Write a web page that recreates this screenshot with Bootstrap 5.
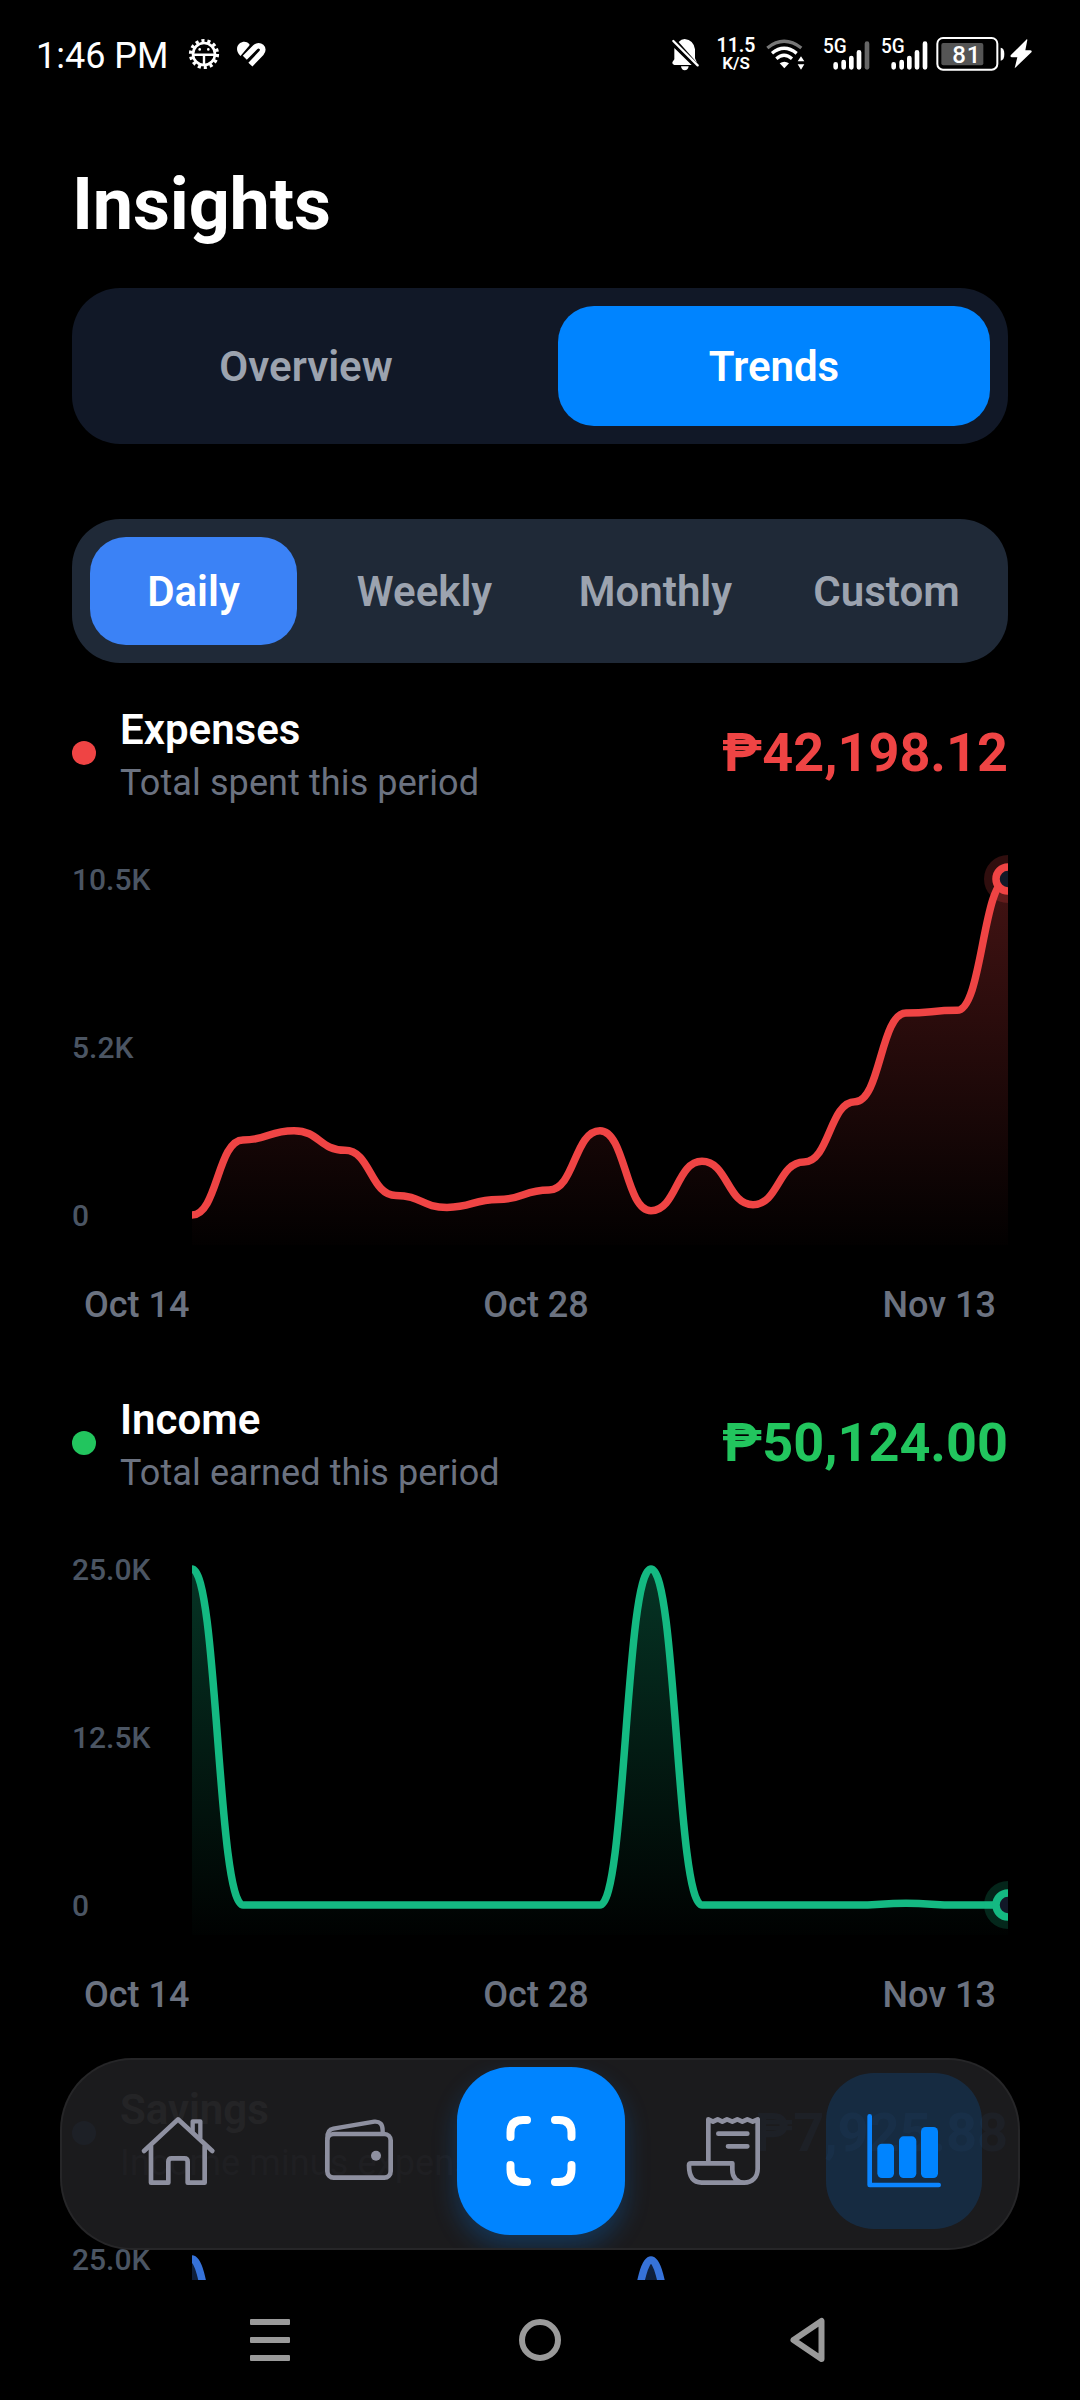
<!DOCTYPE html>
<html lang="en">
<head>
<meta charset="utf-8">
<meta name="viewport" content="width=device-width, initial-scale=1">
<title>Insights</title>
<link href="https://cdn.jsdelivr.net/npm/bootstrap@5.3.0/dist/css/bootstrap.min.css" rel="stylesheet">
<style>
  body { background: #000; color: #fff; font-family: Roboto, "Liberation Sans", sans-serif; }
  .phone { width: 1080px; height: 2400px; background: #000; }
  .statusbar { height: 108px; padding: 0 48px 0 36px; }
  .statusbar svg { overflow: visible; }
  .clock { font-size: 36px; line-height: 42px; padding-top: 3px; }
  .gear { margin-left: 19px; }
  .heart { margin-left: 16px; }
  .netspeed { width: 40px; font-weight: 600; line-height: 17px; font-size: 19.5px; margin-left: 16px; padding-top: 1px; }
  .netspeed span { font-size: 17px; }
  .wifi { margin-left: 10px; }
  .sim1 { margin-left: 17px; }
  .sim2 { margin-left: 11px; }
  .battery { margin-left: 8px; }
  .bolt { margin-left: 5px; }
  .screen { height: 2172px; padding: 55px 72px 0; }
  .page-title { font-size: 72px; line-height: 84px; font-weight: 700; letter-spacing: -.2px; margin-bottom: 41px; }
  .seg { border-radius: 48px; padding: 18px; font-size: 42px; font-weight: 600; color: #9ca3af; }
  .seg-item { border-radius: 36px; flex: 1 1 0; }
  .seg-main { height: 156px; background: #111827; gap: 36px; margin-bottom: 75px; }
  .seg-main .active { background: #0084ff; color: #fff; }
  .seg-range { height: 144px; background: #1f2937; gap: 24px; }
  .seg-range .seg-item { padding-top: 1px; }
  .seg-range .active { background: #3b82f6; color: #fff; }
  .metric { margin-top: 42px; height: 648px; }
  .metric-head { height: 96px; margin-bottom: 48px; }
  .swatch { width: 24px; height: 24px; margin-right: 24px; }
  .metric-name { font-size: 42px; line-height: 50px; font-weight: 600; margin-bottom: 10px; }
  .metric-sub { font-size: 36px; line-height: 36px; letter-spacing: .1px; color: #6b7280; }
  .amount { font-size: 54px; line-height: 60px; font-weight: 700; }
  .axis-y { width: 120px; padding: 13px 0 11px; font-size: 30px; line-height: 36px; font-weight: 500; color: #4b5563; }
  .axis-x { margin-top: 39px; padding: 0 12px; font-size: 36px; line-height: 42px; font-weight: 500; color: #6b7280; }
  .c-red { color: #ef4444; } .c-green { color: #22c55e; } .c-blue { color: #3b82f6; }
  .b-red { background: #ef4444; } .b-green { background: #22c55e; } .b-blue { background: #3b82f6; }
  .tabbar { left: 60px; top: 2058px; width: 960px; height: 192px; border-radius: 72px; padding: 0 23px 6px 25px;
            background: rgba(28,28,30,.965); border: 2px solid rgba(255,255,255,.05); color: #8e90a0; }
  .tab-slot { flex: 1 1 0; }
  .tab { width: 156px; height: 156px; border-radius: 48px; }
  .tab.active { background: rgba(0,132,255,.16); color: #0a84ff; }
  .tab.scan { width: 168px; height: 168px; border-radius: 54px; background: #0084ff; color: #fff; box-shadow: 0 12px 24px rgba(0,132,255,.25); flex: none; }
  .tab svg { fill: none; stroke: currentColor; stroke-linecap: round; stroke-linejoin: round; stroke-width: 14; }
  .tab.scan svg { stroke-width: 8; }
  .sysnav { height: 120px; }
  .sysnav div { width: 270px; }
</style>
<script src="https://cdn.jsdelivr.net/npm/bootstrap@5.3.0/dist/js/bootstrap.bundle.min.js"></script>
</head>
<body>
<div class="phone position-relative overflow-hidden d-flex flex-column">

  <header class="statusbar d-flex align-items-center flex-shrink-0">
    <div class="clock">1:46 PM</div>
    <svg class="gear flex-shrink-0" width="32" height="32" viewBox="-16 -16 32 32" fill="none" stroke="#fff">
      <circle r="13.4" stroke-width="3.4" stroke-dasharray="3.1 2.914"/>
      <circle r="11" stroke-width="2.6"/>
      <path d="M-11 .8H11M0 .8V11" stroke-width="2.4"/>
      <circle cx="-4.3" cy="-4.6" r="1.3" fill="#fff" stroke="none"/><circle cx="4.3" cy="-4.6" r="1.3" fill="#fff" stroke="none"/>
    </svg>
    <svg class="heart flex-shrink-0" width="31" height="27" viewBox="0 0 31 27">
      <path d="M4.500 15C-.8 10 .2 2.800 6 1.200C9 .3 11.300 1.200 13.200 2.900C14 3.700 13.300 4.600 12.500 5.400Z" fill="#fff"/>
      <path d="M8.800 16.800L19.200 6.200C23.500 2 29.500 7.600 25.400 12L14.400 23.600" fill="none" stroke="#fff" stroke-width="5.600"/>
    </svg>

    <div class="ms-auto d-flex align-items-center">
      <svg width="28" height="36" viewBox="97 48 84 108" fill="#fff">
        <path d="M117 66Q125 57 135 57Q162 60 166 88V115L172 128ZM104 84L156 135H104Q97 134 98 127L104 118Z"/>
        <path d="M124 139H147Q145 151 135 151Q126 151 124 139Z"/>
        <path d="M101 63L174 136" stroke="#fff" stroke-width="7" stroke-linecap="round"/>
      </svg>
      <div class="netspeed text-center text-nowrap">11.5<br><span>K/S</span></div>
      <svg class="wifi" width="40" height="36" viewBox="380 48 120 108" fill="none" stroke="#fff" stroke-width="10">
        <path d="M384 84Q434 44 486 84" stroke="#777"/>
        <path d="M398 100Q434 70 472 100"/><path d="M411 116Q434 96 458 116"/>
        <path d="M421 130Q435 120 449 130L435 145Z" fill="#fff" stroke="none"/>
        <path d="M485 109L495 124H475ZM485 149L495 133H475Z" fill="#fff" stroke="none"/>
      </svg>
      <svg class="sim1" width="47" height="36" viewBox="551 48 141 108">
        <text x="551" y="100" fill="#fff" font-size="60" font-weight="500" textLength="71" lengthAdjust="spacingAndGlyphs">5G</text>
        <path d="M589 133V142M613 126V142M636 114V142M659 97V142" stroke="#fff" stroke-width="14" stroke-linecap="round"/>
        <path d="M683 71V142" stroke="#666" stroke-width="14" stroke-linecap="round"/>
      </svg>
      <svg class="sim2" width="47" height="36" viewBox="725 48 141 108">
        <text x="725" y="100" fill="#fff" font-size="60" font-weight="500" textLength="71" lengthAdjust="spacingAndGlyphs">5G</text>
        <path d="M763 133V142M787 126V142M810 114V142M833 97V142M857 71V142" stroke="#fff" stroke-width="14" stroke-linecap="round"/>
      </svg>
      <svg class="battery" width="69" height="36" viewBox="890 48 207 108">
        <rect x="894" y="54" width="180" height="95" rx="17" fill="none" stroke="#fff" stroke-width="6"/>
        <rect x="906" y="69" width="126" height="67" rx="6" fill="#555"/>
        <path d="M1084 83Q1095 84 1095 102Q1095 121 1084 122Z" fill="#fff"/>
        <text x="939" y="128" fill="#fff" font-size="72" font-weight="500" textLength="84">81</text>
      </svg>
      <svg class="bolt" width="22" height="36" viewBox="1112 48 66 108" fill="#fff"><path d="M1163 57L1114 106Q1112 112 1118 112H1134L1126 145L1177 96Q1178 91 1172 91H1158L1164 60Z"/></svg>
    </div>
  </header>

  <main class="screen overflow-hidden flex-shrink-0">
    <h1 class="page-title">Insights</h1>

    <div class="seg seg-main d-flex">
      <div class="seg-item d-flex align-items-center justify-content-center">Overview</div>
      <div class="seg-item active d-flex align-items-center justify-content-center">Trends</div>
    </div>
    <div class="seg seg-range d-flex">
      <div class="seg-item active d-flex align-items-center justify-content-center">Daily</div>
      <div class="seg-item d-flex align-items-center justify-content-center">Weekly</div>
      <div class="seg-item d-flex align-items-center justify-content-center">Monthly</div>
      <div class="seg-item d-flex align-items-center justify-content-center">Custom</div>
    </div>

    <section class="metric">
      <div class="metric-head d-flex align-items-center">
        <span class="swatch rounded-circle b-red"></span>
        <div><div class="metric-name">Expenses</div><div class="metric-sub">Total spent this period</div></div>
        <div class="amount c-red ms-auto">₱42,198.12</div>
      </div>
      <div class="d-flex">
        <div class="axis-y d-flex flex-column justify-content-between"><span>10.5K</span><span>5.2K</span><span>0</span></div>
        <svg class="plot d-block" width="816" height="396" data-color="#ef4444" data-marker="1"
             data-y="366 291 281.7 301.3 346.5 358.4 350.5 341 281.7 361.7 312.3 355.7 313 252.7 164 161.3 30"></svg>
      </div>
      <div class="axis-x d-flex justify-content-between"><span>Oct 14</span><span>Oct 28</span><span>Nov 13</span></div>
    </section>

    <section class="metric">
      <div class="metric-head d-flex align-items-center">
        <span class="swatch rounded-circle b-green"></span>
        <div><div class="metric-name">Income</div><div class="metric-sub">Total earned this period</div></div>
        <div class="amount c-green ms-auto">₱50,124.00</div>
      </div>
      <div class="d-flex">
        <div class="axis-y d-flex flex-column justify-content-between"><span>25.0K</span><span>12.5K</span><span>0</span></div>
        <svg class="plot d-block" width="816" height="396" data-color="#14b982" data-marker="1"
             data-y="30 366 366 366 366 366 366 366 366 30 366 366 366 366 364.3 366 366"></svg>
      </div>
      <div class="axis-x d-flex justify-content-between"><span>Oct 14</span><span>Oct 28</span><span>Nov 13</span></div>
    </section>

    <section class="metric">
      <div class="metric-head d-flex align-items-center">
        <span class="swatch rounded-circle b-blue"></span>
        <div><div class="metric-name">Savings</div><div class="metric-sub">Income minus expenses</div></div>
        <div class="amount c-blue ms-auto">₱7,925.88</div>
      </div>
      <div class="d-flex">
        <div class="axis-y d-flex flex-column"><span>25.0K</span></div>
        <svg class="plot d-block" width="816" height="396" data-color="#3672d9"
             data-y="30 366 366 366 366 366 366 366 366 31 366 366 366 366 366 366 366"></svg>
      </div>
    </section>
  </main>

  <nav class="tabbar position-absolute d-flex align-items-center overflow-hidden">
    <div class="tab-slot d-flex justify-content-center"><div class="tab d-flex align-items-center justify-content-center">
      <svg width="78" height="78" viewBox="294 246 234 234">
        <path d="M309 363L411 268L514 363"/>
        <path d="M455 304V274H478V324" stroke-width="13"/>
        <path d="M330 348V458H382V395Q382 385 392 385H430Q440 385 440 395V458H491V348"/>
      </svg></div></div>
    <div class="tab-slot d-flex justify-content-center"><div class="tab d-flex align-items-center justify-content-center">
      <svg width="78" height="78" viewBox="840 246 234 234">
        <rect x="862" y="312" width="190" height="131" rx="19"/>
        <path d="M862 326Q861 299 880 296L1003 275Q1028 273 1028 302V308" stroke-width="13"/>
        <circle cx="1008" cy="377" r="15" fill="currentColor" stroke="none"/>
      </svg></div></div>
    <div class="tab-slot d-flex justify-content-center"><div class="tab scan d-flex align-items-center justify-content-center">
      <svg width="78" height="78" viewBox="0 0 78 78">
        <path d="M8.500 25V20.500Q8.500 8 21 8H25M53 8H57Q69.500 8 69.500 20.500V25M69.500 53V57.500Q69.500 70 57 70H53M25 70H21Q8.500 70 8.500 57.500V53"/>
      </svg></div></div>
    <div class="tab-slot d-flex justify-content-center"><div class="tab d-flex align-items-center justify-content-center">
      <svg width="78" height="78" viewBox="69 186 234 234">
        <path d="M142 338V208L156 215L170 208L184 215L198 208L214 215L229 208L244 215L259 208L275 215L290 208V356C290 382 273 398 250 398C228 398 214 382 214 360V340H90Q84 340 84 346C84 374 92 398 122 398H250"/>
        <path d="M172 251H259M201 289H259"/>
      </svg></div></div>
    <div class="tab-slot d-flex justify-content-center"><div class="tab active d-flex align-items-center justify-content-center">
      <svg width="78" height="78" viewBox="615 186 234 234">
        <path d="M629 199V405H836"/>
        <g fill="#0084ff" stroke="none"><rect x="652" y="281" width="50" height="103" rx="14"/><rect x="717" y="259" width="52" height="125" rx="14"/><rect x="783" y="231" width="51" height="153" rx="14"/></g>
      </svg></div></div>
  </nav>

  <footer class="sysnav d-flex align-items-center justify-content-center flex-shrink-0">
    <div class="text-center"><svg width="40" height="42" viewBox="0 0 40 42" fill="#9a9a9a"><rect width="40" height="6" rx="1"/><rect y="18" width="40" height="6" rx="1"/><rect y="36" width="40" height="6" rx="1"/></svg></div>
    <div class="text-center"><svg width="42" height="42" viewBox="0 0 42 42"><circle cx="21" cy="21" r="18" fill="none" stroke="#9a9a9a" stroke-width="6"/></svg></div>
    <div class="text-center"><svg width="40" height="46" viewBox="0 0 40 46"><path d="M31.500 4V42L3.500 23Z" fill="none" stroke="#9a9a9a" stroke-width="6" stroke-linejoin="round"/></svg></div>
  </footer>
</div>

<script>
  // Area charts: points 51px apart, each segment eased with horizontal tangents.
  const STEP = 51, HALF = STEP / 2, BOTTOM = 396;
  document.querySelectorAll('svg.plot').forEach((svg, n) => {
    const ys = svg.dataset.y.split(' ').map(Number), color = svg.dataset.color;
    let d = `M0 ${ys[0]}`;
    for (let i = 1; i < ys.length; i++) {
      const x = i * STEP;
      d += `C${x - HALF} ${ys[i - 1]} ${x - HALF} ${ys[i]} ${x} ${ys[i]}`;
    }
    const end = (ys.length - 1) * STEP, last = ys[ys.length - 1];
    svg.innerHTML =
      `<defs><linearGradient id="fade${n}" gradientUnits="userSpaceOnUse" x1="0" y1="30" x2="0" y2="${BOTTOM}">
        <stop offset="0" stop-color="${color}" stop-opacity=".28"/><stop offset="1" stop-color="${color}" stop-opacity=".01"/></linearGradient></defs>
      <path d="${d}L${end} ${BOTTOM}L0 ${BOTTOM}Z" fill="url(#fade${n})"/>
      <path d="${d}" fill="none" stroke="${color}" stroke-width="7.500"/>` +
      (svg.dataset.marker ? `<circle cx="${end}" cy="${last}" r="24" fill="${color}" fill-opacity=".2"/>
      <circle cx="${end}" cy="${last}" r="12" fill="#111827" stroke="${color}" stroke-width="7.500"/>` : '');
  });
</script>
</body>
</html>
